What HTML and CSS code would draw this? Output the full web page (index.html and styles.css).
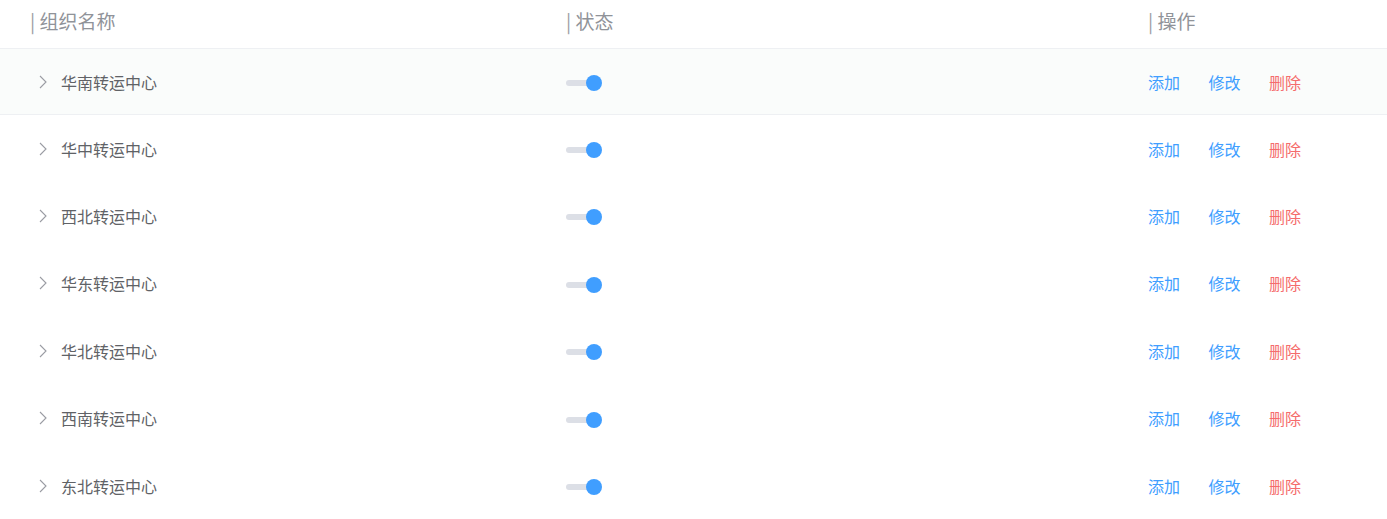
FILE: index.html
```html
<!DOCTYPE html>
<html lang="zh">
<head>
<meta charset="utf-8">
<title>组织管理</title>
<link rel="stylesheet" href="styles.css">
</head>
<body>
<div class="table">
  <div class="row head">
    <div class="cell"><span class="bar">|</span> 组织名称</div>
    <div class="cell"><span class="bar">|</span> 状态</div>
    <div class="cell"><span class="bar">|</span> 操作</div>
  </div>
  <div class="row body hover">
    <div class="cell name"><svg class="chev" viewBox="0 0 8 14" width="8" height="14"><path d="M1 1 L7 7 L1 13" fill="none" stroke="#9a9ca3" stroke-width="1.1"/></svg><span>华南转运中心</span></div>
    <div class="cell"><span class="switch"><span class="knob"></span></span></div>
    <div class="cell ops"><a class="op">添加</a><a class="op">修改</a><a class="op del">删除</a></div>
  </div>
  <div class="row body">
    <div class="cell name"><svg class="chev" viewBox="0 0 8 14" width="8" height="14"><path d="M1 1 L7 7 L1 13" fill="none" stroke="#9a9ca3" stroke-width="1.1"/></svg><span>华中转运中心</span></div>
    <div class="cell"><span class="switch"><span class="knob"></span></span></div>
    <div class="cell ops"><a class="op">添加</a><a class="op">修改</a><a class="op del">删除</a></div>
  </div>
  <div class="row body">
    <div class="cell name"><svg class="chev" viewBox="0 0 8 14" width="8" height="14"><path d="M1 1 L7 7 L1 13" fill="none" stroke="#9a9ca3" stroke-width="1.1"/></svg><span>西北转运中心</span></div>
    <div class="cell"><span class="switch"><span class="knob"></span></span></div>
    <div class="cell ops"><a class="op">添加</a><a class="op">修改</a><a class="op del">删除</a></div>
  </div>
  <div class="row body">
    <div class="cell name"><svg class="chev" viewBox="0 0 8 14" width="8" height="14"><path d="M1 1 L7 7 L1 13" fill="none" stroke="#9a9ca3" stroke-width="1.1"/></svg><span>华东转运中心</span></div>
    <div class="cell"><span class="switch"><span class="knob"></span></span></div>
    <div class="cell ops"><a class="op">添加</a><a class="op">修改</a><a class="op del">删除</a></div>
  </div>
  <div class="row body">
    <div class="cell name"><svg class="chev" viewBox="0 0 8 14" width="8" height="14"><path d="M1 1 L7 7 L1 13" fill="none" stroke="#9a9ca3" stroke-width="1.1"/></svg><span>华北转运中心</span></div>
    <div class="cell"><span class="switch"><span class="knob"></span></span></div>
    <div class="cell ops"><a class="op">添加</a><a class="op">修改</a><a class="op del">删除</a></div>
  </div>
  <div class="row body">
    <div class="cell name"><svg class="chev" viewBox="0 0 8 14" width="8" height="14"><path d="M1 1 L7 7 L1 13" fill="none" stroke="#9a9ca3" stroke-width="1.1"/></svg><span>西南转运中心</span></div>
    <div class="cell"><span class="switch"><span class="knob"></span></span></div>
    <div class="cell ops"><a class="op">添加</a><a class="op">修改</a><a class="op del">删除</a></div>
  </div>
  <div class="row body">
    <div class="cell name"><svg class="chev" viewBox="0 0 8 14" width="8" height="14"><path d="M1 1 L7 7 L1 13" fill="none" stroke="#9a9ca3" stroke-width="1.1"/></svg><span>东北转运中心</span></div>
    <div class="cell"><span class="switch"><span class="knob"></span></span></div>
    <div class="cell ops"><a class="op">添加</a><a class="op">修改</a><a class="op del">删除</a></div>
  </div>
</div>
</body>
</html>
```

FILE: styles.css
```css
html, body {
  margin: 0;
  padding: 0;
  background: #ffffff;
  font-family: "Noto Sans CJK SC", "Noto Sans", sans-serif;
}
.table {
  width: 1387px;
}
.row {
  display: grid;
  grid-template-columns: 536px 582px 1fr;
  padding-left: 30px;
  align-items: center;
  box-sizing: border-box;
}
.head {
  height: 49px;
  border-bottom: 1px solid #eef0f3;
  color: #909399;
  font-size: 19px;
  padding-bottom: 8px;
}
.bar {
  color: #9a9ca3;
}
.body {
  height: 67.4px;
  border-bottom: 1px solid transparent;
  font-size: 16px;
  color: #606266;
}
.body.hover {
  background: #fafcfb;
  border-bottom-color: #eef0f3;
  height: 66.4px;
}
.name {
  display: flex;
  align-items: center;
  padding-left: 9px;
}
.chev {
  display: block;
  margin-right: 14px;
}
.switch {
  position: relative;
  display: block;
  width: 32px;
  height: 6px;
  border-radius: 3px;
  background: #dcdfe6;
  margin-top: 3px;
}
.knob {
  position: absolute;
  left: 20px;
  top: -5px;
  width: 16px;
  height: 16px;
  border-radius: 50%;
  background: #409eff;
}
.ops {
  display: flex;
  gap: 28.5px;
}
.op {
  color: #409eff;
  cursor: pointer;
}
.op.del {
  color: #f56c6c;
}
```
